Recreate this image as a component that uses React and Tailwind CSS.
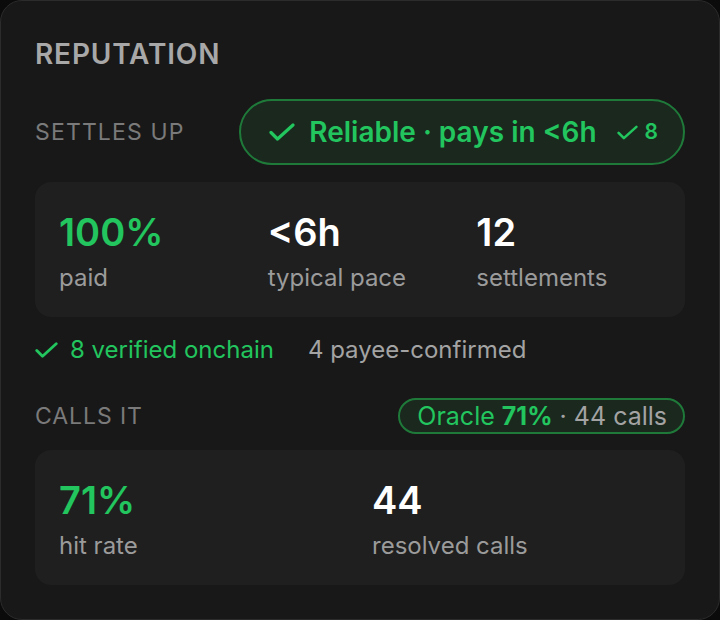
import React from "react";

const Check = ({ className }) => (
  <svg viewBox="0 0 26 18" fill="none" stroke="currentColor" strokeWidth="3.2" strokeLinecap="round" strokeLinejoin="round" className={className}>
    <path d="M2 9.5l6.5 6.5L24 2" />
  </svg>
);

const Stat = ({ value, label, green }) => (
  <div className="flex flex-col">
    <div className={`text-[38px] font-semibold leading-[44px] ${green ? "text-[#22c55e]" : "text-white"}`}>{value}</div>
    <div className="mt-[8px] text-[24px] leading-[32px] text-[#9b9b9b]">{label}</div>
  </div>
);

export default function App() {
  return (
    <div className="w-[720px] h-[620px] bg-[#0b0b0b] font-['Inter',sans-serif]">
      <div className="w-full h-full rounded-[22px] border border-[#2c2c2c] bg-[#181818] px-[34px] pt-[35px]">
        <h2 className="text-[28px] font-semibold leading-[36px] tracking-[0.03em] text-[#a8a8a8]">REPUTATION</h2>

        <div className="mt-[27px] flex items-center justify-between">
          <span className="text-[23px] leading-[30px] tracking-[0.05em] text-[#7a7a7a]">SETTLES UP</span>
          <div className="flex h-[66px] items-center rounded-full border-2 border-[#1f7a3a] bg-[#1a281e] pl-[28px] pr-[25px] text-[#22c55e]">
            <Check className="w-[26px] h-[18px]" />
            <span className="ml-[14px] text-[28px] font-semibold">Reliable · pays in &lt;6h</span>
            <span className="ml-[20px] flex items-center gap-[7px] text-[21px] font-semibold">
              <Check className="w-[21px] h-[15px]" />8
            </span>
          </div>
        </div>

        <div className="mt-[17px] grid grid-cols-3 gap-x-[24px] rounded-[16px] bg-[#1f1f1f] px-[24px] pt-[28px] pb-[23px]">
          <Stat value="100%" label="paid" green />
          <Stat value="<6h" label="typical pace" />
          <Stat value="12" label="settlements" />
        </div>

        <div className="mt-[17px] flex items-center text-[24px] leading-[32px]">
          <Check className="w-[23px] h-[16px] text-[#22c55e]" />
          <span className="ml-[12px] text-[#22c55e]">8 verified onchain</span>
          <span className="ml-[34px] text-[#a3a3a3]">4 payee-confirmed</span>
        </div>

        <div className="mt-[32px] flex items-center justify-between">
          <span className="text-[23px] leading-[30px] tracking-[0.04em] text-[#7a7a7a]">CALLS IT</span>
          <div className="flex h-[36px] items-center rounded-full border-2 border-[#1f7a3a] bg-[#1a281e] pl-[17px] pr-[16px] text-[25px] leading-[30px] whitespace-pre">
            <span className="text-[#22c55e]">Oracle <span className="font-bold">71%</span></span>
            <span className="text-[#a3a3a3]"> · 44 calls</span>
          </div>
        </div>

        <div className="mt-[16px] grid grid-cols-2 gap-x-[24px] rounded-[16px] bg-[#1f1f1f] px-[24px] pt-[28px] pb-[23px]">
          <Stat value="71%" label="hit rate" green />
          <Stat value="44" label="resolved calls" />
        </div>
      </div>
    </div>
  );
}
